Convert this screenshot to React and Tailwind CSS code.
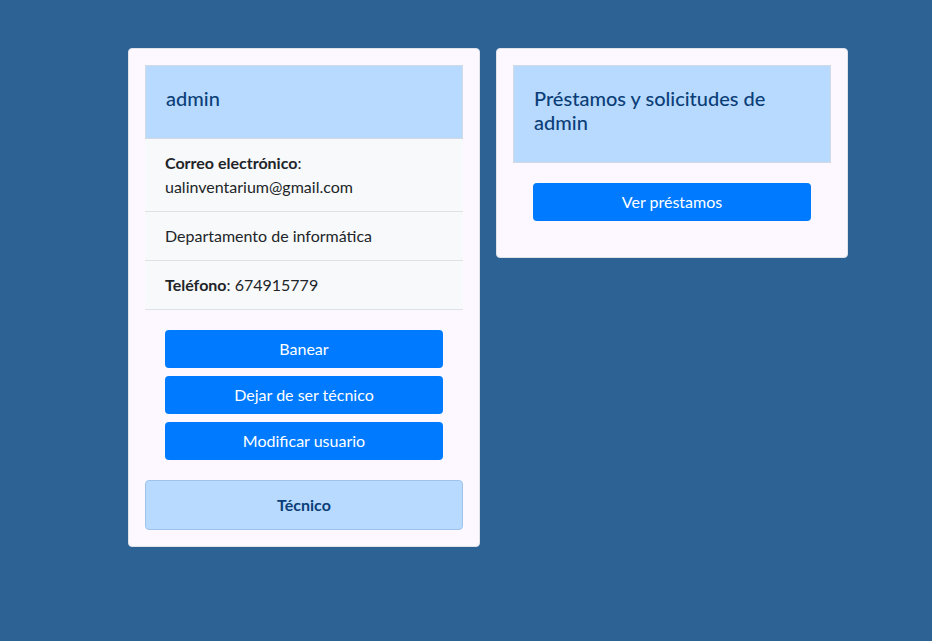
export default function App() {
  const btn =
    'w-full h-[38px] rounded bg-[#007bff] text-white text-base leading-6';

  return (
    <div
      className="min-h-[641px] w-full bg-[#2d6394] pt-12 pl-32"
      style={{ fontFamily: 'Lato, "Noto Sans", sans-serif' }}
    >
      <div className="flex items-start gap-4">
        {/* user card */}
        <div className="w-[352px] rounded bg-[#fdf8ff] border border-[#dfe3e8] p-4">
          <div className="bg-[#b8daff] border border-[#d2dbe4] px-5 pt-5 pb-7">
            <h5 className="text-[20px] leading-6 font-medium text-[#0b3e77]">admin</h5>
          </div>
          <ul className="text-base leading-6 text-[#212529]">
            <li className="bg-[#f8f9fa] border-b border-[#dee2e6] px-5 py-3">
              <b className="font-bold">Correo electrónico</b>:<br />
              ualinventarium@gmail.com
            </li>
            <li className="bg-[#f8f9fa] border-b border-[#dee2e6] px-5 py-3">
              Departamento de informática
            </li>
            <li className="bg-[#f8f9fa] border-b border-[#dee2e6] px-5 py-3">
              <b className="font-bold">Teléfono</b>: 674915779
            </li>
          </ul>
          <div className="flex flex-col gap-2 px-5 py-5">
            <button className={btn}>Banear</button>
            <button className={btn}>Dejar de ser técnico</button>
            <button className={btn}>Modificar usuario</button>
          </div>
          <div className="bg-[#b8daff] border border-[#9fc3ea] rounded py-3 text-center text-base leading-6 font-bold text-[#0b3e77]">
            Técnico
          </div>
        </div>

        {/* loans card */}
        <div className="w-[352px] rounded bg-[#fdf8ff] border border-[#dfe3e8] p-4">
          <div className="bg-[#b8daff] border border-[#d2dbe4] px-5 pt-5 pb-7">
            <h5 className="text-[20px] leading-6 font-medium text-[#0b3e77]">
              Préstamos y solicitudes de admin
            </h5>
          </div>
          <div className="px-5 pt-5 pb-5">
            <button className={btn}>Ver préstamos</button>
          </div>
        </div>
      </div>
    </div>
  );
}
